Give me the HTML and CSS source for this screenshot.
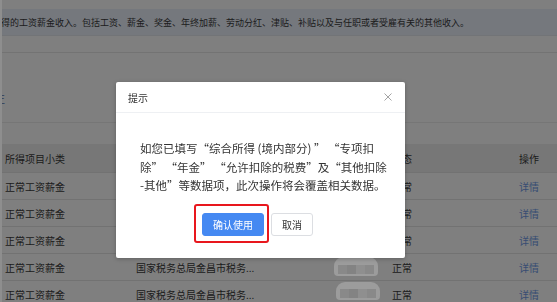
FILE: index.html
```html
<!DOCTYPE html>
<html lang="zh-CN">
<head>
<meta charset="utf-8">
<title>提示</title>
<link rel="stylesheet" href="styles.css">
</head>
<body>
<div class="page">
  <div class="notice"><span class="notice-text">得的工资薪金收入。包括工资、薪金、奖金、年终加薪、劳动分红、津贴、补贴以及与任职或者受雇有关的其他收入。</span></div>
  <div class="toolbar"></div>
  <div class="filter"><span class="cut">正</span></div>
  <table class="grid">
    <colgroup>
      <col class="c1"><col class="c2"><col class="c3"><col class="c4"><col class="c5">
    </colgroup>
    <thead>
      <tr><th>所得项目小类</th><th>扣缴义务人</th><th></th><th>状态</th><th>操作</th></tr>
    </thead>
    <tbody>
      <tr><td>正常工资薪金</td><td>国家税务总局金昌市税务...</td><td></td><td>正常</td><td><a class="link">详情</a></td></tr>
      <tr><td>正常工资薪金</td><td>国家税务总局金昌市税务...</td><td></td><td>正常</td><td><a class="link">详情</a></td></tr>
      <tr><td>正常工资薪金</td><td>国家税务总局金昌市税务...</td><td></td><td>正常</td><td><a class="link">详情</a></td></tr>
      <tr><td>正常工资薪金</td><td>国家税务总局金昌市税务...</td><td></td><td>正常</td><td><a class="link">详情</a></td></tr>
      <tr><td>正常工资薪金</td><td>国家税务总局金昌市税务...</td><td></td><td>正常</td><td><a class="link">详情</a></td></tr>
    </tbody>
  </table>
</div>

<div class="mask"></div>
<div class="mosaic m1"><i></i><i></i><i></i><i></i></div>
<div class="mosaic m2"><i></i><i></i><i></i><i></i></div>

<div class="modal">
  <div class="modal-head">
    <span class="modal-title">提示</span>
    <svg class="close" width="8" height="8" viewBox="0 0 8 8"><path d="M0.5 0.5L7.5 7.5M7.5 0.5L0.5 7.5" stroke="#a3a3a3" stroke-width="1" fill="none"/></svg>
  </div>
  <div class="modal-body">
    如您已填写“综合所得 (境内部分) ” “专项扣<br>除” “年金” “允许扣除的税费”及“其他扣除<br>-其他”等数据项，此次操作将会覆盖相关数据。
  </div>
  <div class="modal-foot">
    <span class="highlight"><button class="btn btn-primary">确认使用</button></span>
    <button class="btn btn-default">取消</button>
  </div>
</div>
</body>
</html>
```
FILE: styles.css
```css
html {
  background: #8e8e8e;
}
body {
  margin: 0;
  font-family: "Noto Sans CJK SC", "Microsoft YaHei", sans-serif;
  color: #3a3a3a;
  overflow: hidden;
  height: 302px;
}
.page {
  margin-left: 2px;
  background: #fff;
  height: 302px;
  padding-top: 9px;
  box-sizing: border-box;
}
.notice {
  height: 27px;
  line-height: 27px;
  background: #eaf0fa;
  font-size: 9px;
  white-space: nowrap;
  overflow: hidden;
  border-bottom: 1px solid #e4e8ef;
  box-sizing: border-box;
}
.notice-text {
  margin-left: -1px;
}
.toolbar {
  height: 16px;
  border-bottom: 1px solid #e6e6e6;
}
.filter {
  height: 69px;
  border-bottom: 1px solid #ececec;
  position: relative;
  overflow: hidden;
}
.cut {
  display: block;
  margin-left: -7px;
  margin-top: 38px;
  font-size: 10px;
  color: #5a78b0;
}
.grid {
  margin-top: 21px;
  width: 555px;
  border-collapse: collapse;
  table-layout: fixed;
  font-size: 10px;
}
.c1 { width: 131px; }
.c2 { width: 200px; }
.c3 { width: 56px; }
.c4 { width: 128px; }
.c5 { width: 40px; }
.grid th {
  background: #eeeeee;
  height: 28px;
  font-weight: normal;
  text-align: left;
  padding: 0 0 0 3px;
  white-space: nowrap;
}
.grid td {
  height: 26px;
  padding: 0 0 0 3px;
  border-top: 1px solid #e4e4e4;
  white-space: nowrap;
  overflow: hidden;
}
.grid td:nth-child(5),
.grid th:nth-child(5) {
  padding-left: 2px;
}
.link {
  color: #6f9ae6;
}
.mask {
  position: fixed;
  inset: 0 0 0 2px;
  background: rgba(0, 0, 0, 0.5);
}
.mosaic {
  position: absolute;
  width: 44px;
  height: 19px;
  border-radius: 9px 9px 4px 4px;
  background: #9c9c9c;
  display: flex;
  align-items: flex-end;
  padding: 0 4px 2px;
  box-sizing: border-box;
  filter: blur(0.6px);
}
.mosaic i {
  flex: 1;
  height: 9px;
  background: #898989;
}
.mosaic i:nth-child(2) { background: #838383; }
.mosaic i:nth-child(3) { background: #8f8f8f; }
.m1 { left: 334px; top: 257px; }
.m2 { left: 336px; top: 282px; height: 18px; }
.modal {
  position: absolute;
  left: 116px;
  top: 82px;
  width: 289px;
  height: 176px;
  background: #fff;
  border-radius: 2px;
  box-shadow: 0 1px 4px rgba(0, 0, 0, 0.25);
  color: #333;
}
.modal-head {
  height: 31px;
  display: flex;
  align-items: center;
  justify-content: space-between;
  padding: 0 12px 0 12px;
  border-bottom: 1px solid #eef0f3;
  box-sizing: border-box;
}
.modal-title {
  font-size: 10px;
}
.close {
  margin-right: 1px;
}
.modal-body {
  padding: 26px 10px 0 24px;
  font-size: 11.5px;
  line-height: 18.5px;
  white-space: nowrap;
}
.modal-foot {
  display: flex;
  align-items: flex-start;
  padding: 9px 0 0 78px;
}
.highlight {
  display: inline-flex;
  border: 2px solid #e8171d;
  border-radius: 3px;
  padding: 7px 3px 5px 6px;
}
.btn {
  font-family: inherit;
  font-size: 10px;
  height: 23px;
  border-radius: 3px;
  cursor: pointer;
  padding: 0;
}
.btn-primary {
  width: 62px;
  background: #4589f2;
  border: 1px solid #4589f2;
  color: #fff;
}
.btn-default {
  width: 42px;
  margin-top: 9px;
  margin-left: 2px;
  background: #fff;
  border: 1px solid #dcdee2;
  color: #333;
}
```
